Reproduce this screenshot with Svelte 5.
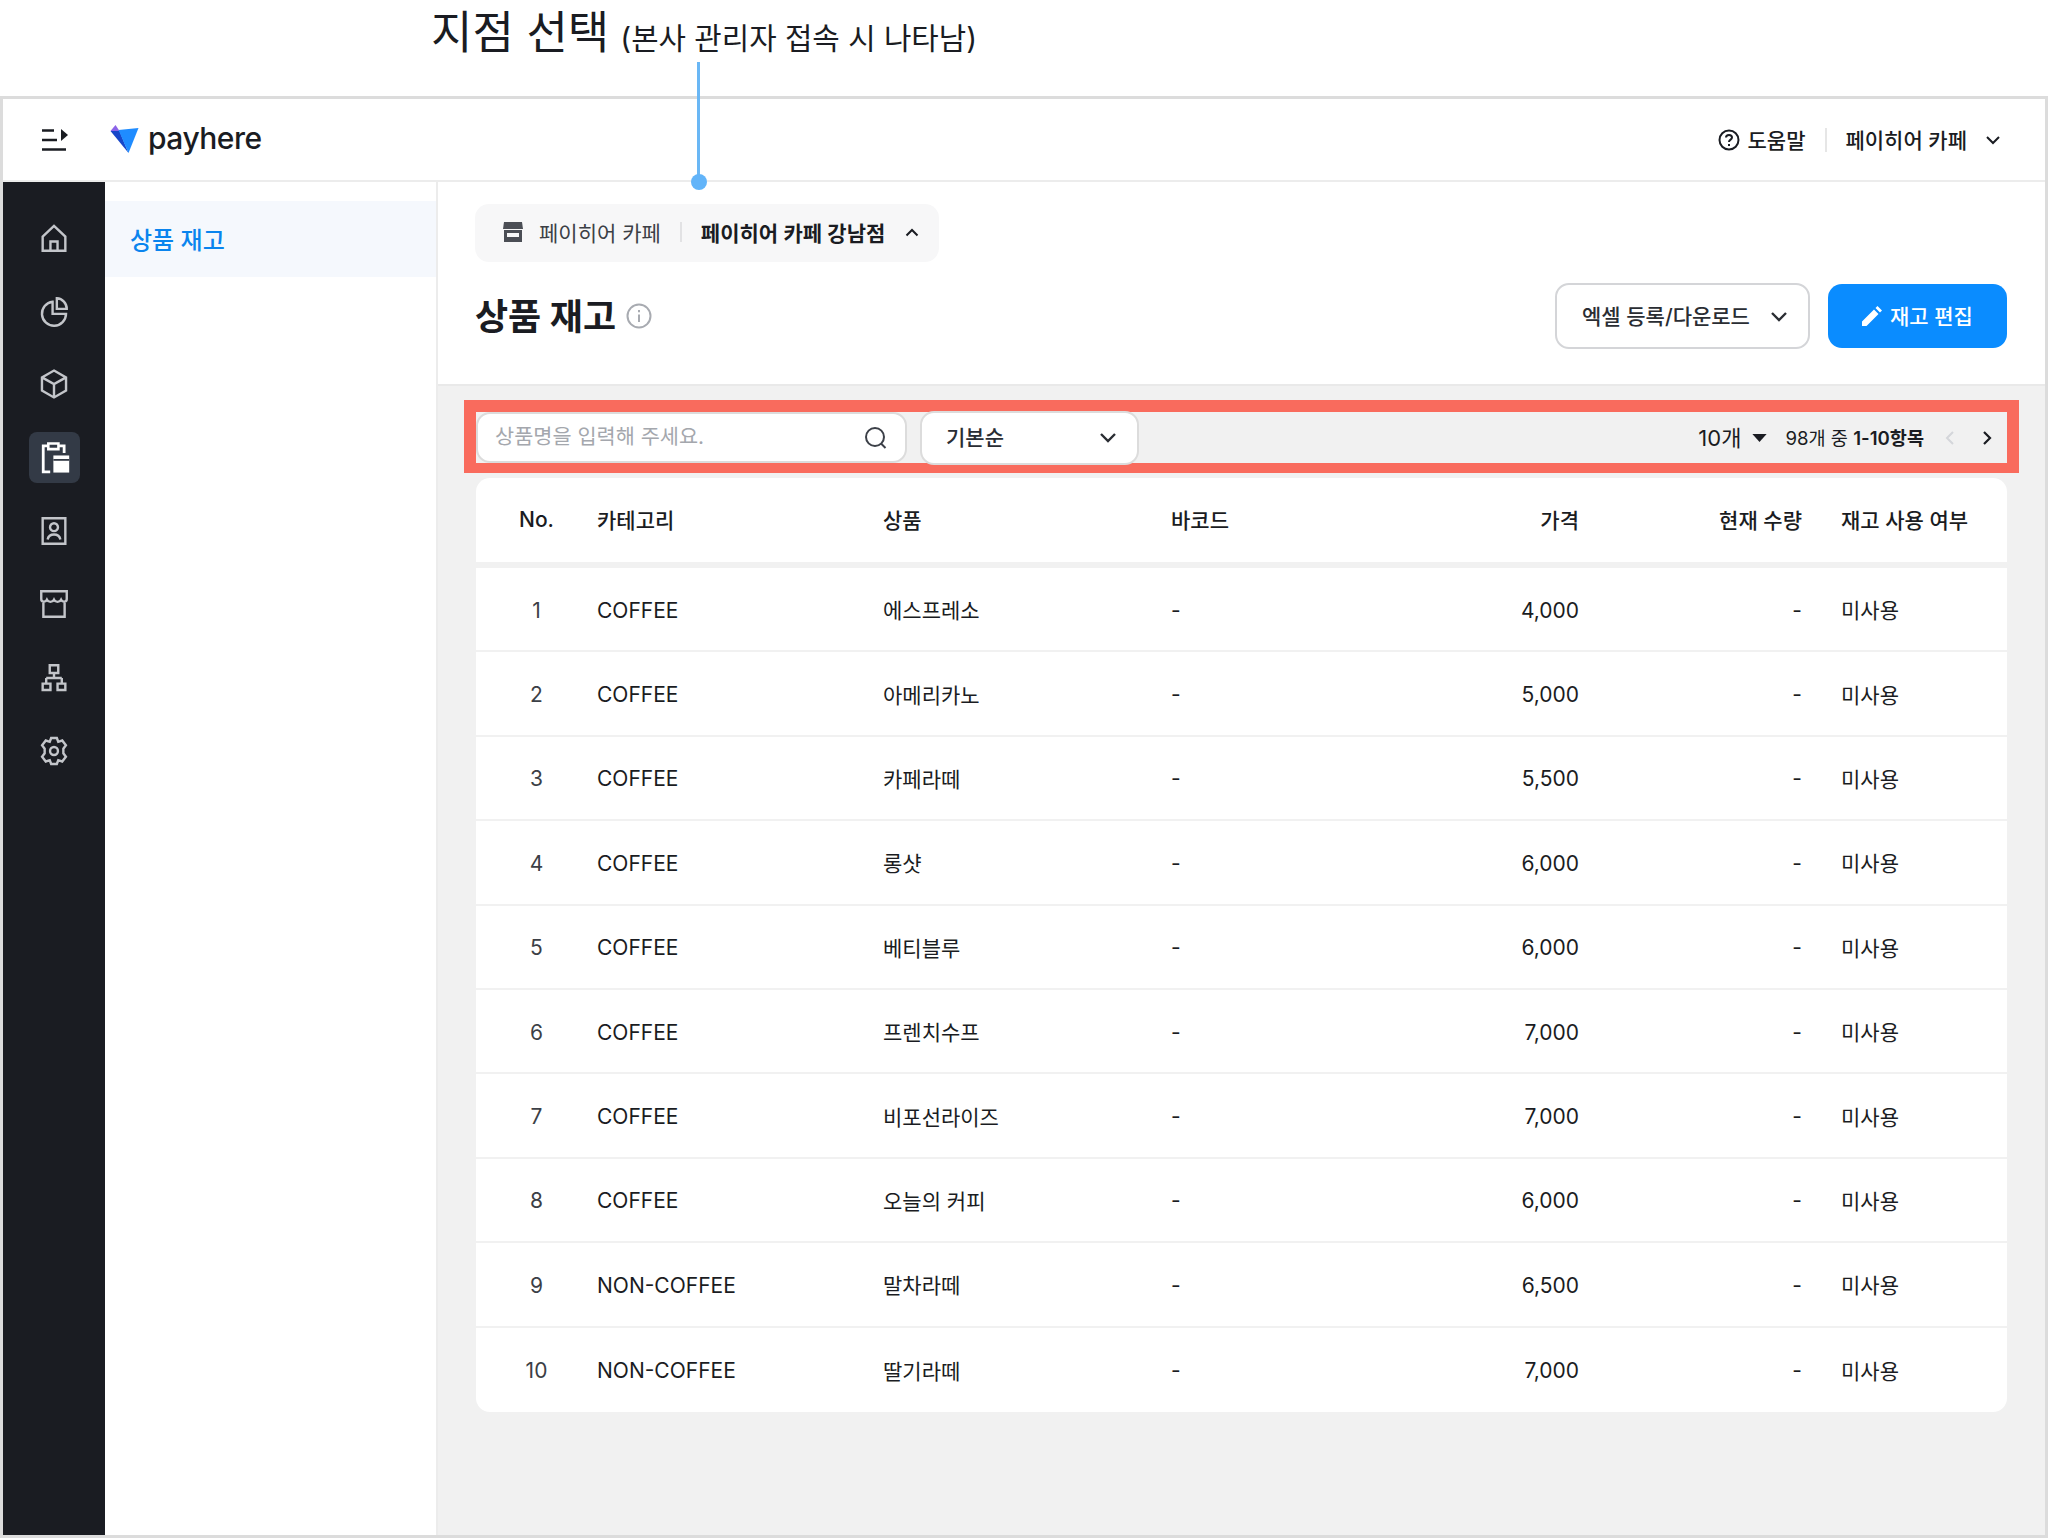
<script lang="ts">
    const rows = [
        { no: 1, category: 'COFFEE', name: '에스프레소', price: '4,000' },
        { no: 2, category: 'COFFEE', name: '아메리카노', price: '5,000' },
        { no: 3, category: 'COFFEE', name: '카페라떼', price: '5,500' },
        { no: 4, category: 'COFFEE', name: '롱샷', price: '6,000' },
        { no: 5, category: 'COFFEE', name: '베티블루', price: '6,000' },
        { no: 6, category: 'COFFEE', name: '프렌치수프', price: '7,000' },
        { no: 7, category: 'COFFEE', name: '비포선라이즈', price: '7,000' },
        { no: 8, category: 'COFFEE', name: '오늘의 커피', price: '6,000' },
        { no: 9, category: 'NON-COFFEE', name: '말차라떼', price: '6,500' },
        { no: 10, category: 'NON-COFFEE', name: '딸기라떼', price: '7,000' }
    ];

    const navIcons = [
        'M4 11 12 3.5 20 11V21H4ZM9.5 21V14.5H14.5V21',
        'M11 5.5A8.5 8.5 0 1 0 20.5 14H11ZM14 3A7.5 7.5 0 0 1 21 10.5H14Z',
        'M12 2.5 20.5 7.3V16.7L12 21.5 3.5 16.7V7.3ZM3.5 7.3 12 12 20.5 7.3M12 12V21.5',
        '',
        'M4 3H20V21H4ZM7.5 18C8 15.5 10 14.5 12 14.5S16 15.5 16.5 18M12 6.5A2.8 2.8 0 1 0 12 12.1 2.8 2.8 0 1 0 12 6.5Z',
        'M3 3H21V8.5C21 11 18 11 17 9 16 11 13 11 12 9 11 11 8 11 7 9 6 11 3 11 3 8.5ZM4.5 10.5V21H19.5V10.5',
        'M9 3H15V8.5H9ZM12 8.5V12M6.5 12H17.5M4 16H9.5V20.5H4ZM14.5 16H20V20.5H14.5ZM6.5 12V16M17.5 12V16',
        'M10 2.8H14L15 5.5 17.8 4.6 20.4 8 18.6 10.4V13.6L20.4 16 17.8 19.4 15 18.5 14 21.2H10L9 18.5 6.2 19.4 3.6 16 5.4 13.6V10.4L3.6 8 6.2 4.6 9 5.5ZM12 9.2A2.8 2.8 0 1 0 12 14.8 2.8 2.8 0 1 0 12 9.2Z'
    ];
</script>

<div class="page">
    <div class="annotation">
        <span class="anno-title">지점 선택</span>
        <span class="anno-sub">(본사 관리자 접속 시 나타남)</span>
    </div>
    <div class="pointer"></div>

    <div class="frame">
        <header class="topbar">
            <svg class="menu-icon" width="26" height="22" viewBox="0 0 26 22">
                <path d="M0 1.5H12M0 11H15M0 20.5H24" stroke="#1a1c22" stroke-width="2.4" fill="none" />
                <path d="M19 0 26 6 19 12Z" fill="#1a1c22" />
            </svg>
            <svg class="logo-mark" width="31" height="30" viewBox="0 0 30 30">
                <path d="M1 6 6 0 10 6Z" fill="#8c63e8" />
                <path d="M1 6 19 28 10 6Z" fill="#1746c9" />
                <path d="M9 5 29 3 19 28Z" fill="#1f8cff" />
            </svg>
            <span class="logo-text">payhere</span>
            <div class="topbar-right">
                <svg width="22" height="22" viewBox="0 0 22 22" fill="none" stroke="#1a1c22" stroke-width="2">
                    <circle cx="11" cy="11" r="9.5" />
                    <path d="M8 8.6C8 6.8 9.4 6 11 6S14 7 14 8.6C14 10.6 11 10.6 11 13" />
                    <path d="M11 15V17" />
                </svg>
                <span class="help">도움말</span>
                <span class="top-divider"></span>
                <span class="account">페이히어 카페</span>
                <svg width="16" height="10" viewBox="0 0 16 10" fill="none" stroke="#1a1c22" stroke-width="2">
                    <path d="M2 2 8 8 14 2" />
                </svg>
            </div>
        </header>

        <div class="body">
            <nav class="rail">
                {#each navIcons as d, i}
                    <div class="rail-item" class:active={i === 3}>
                        {#if i === 3}
                            <svg width="38" height="38" viewBox="0 0 30 30">
                                <path d="M11 5.5H6.5V26H12M19 5.5H23V11" fill="none" stroke="#fff" stroke-width="2.2" />
                                <path d="M10.5 3.5H18.5V8H10.5Z" fill="none" stroke="#fff" stroke-width="2" />
                                <path d="M14.5 13H27V26.5H14.5Z" fill="#fff" />
                                <path d="M14.5 16.5H27" stroke="#333a46" stroke-width="1.4" />
                            </svg>
                        {:else}
                            <svg width="34" height="34" viewBox="0 0 24 24" fill="none" stroke="#c3c5ca" stroke-width="1.7">
                                <path {d} />
                            </svg>
                        {/if}
                    </div>
                {/each}
            </nav>

            <aside class="subnav">
                <div class="subnav-item">상품 재고</div>
            </aside>

            <main class="content">
                <section class="head">
                    <div class="branch">
                        <svg width="22" height="20" viewBox="0 0 22 20">
                            <path d="M2 0H20L21 7H1Z" fill="#4b4e55" />
                            <path d="M2 8H20V20H2Z" fill="#4b4e55" />
                            <path d="M5 11H17V15H5Z" fill="#f7f7f8" />
                        </svg>
                        <span class="branch-hq">페이히어 카페</span>
                        <span class="branch-divider"></span>
                        <span class="branch-store">페이히어 카페 강남점</span>
                        <svg width="14" height="9" viewBox="0 0 14 9" fill="none" stroke="#1a1c22" stroke-width="2">
                            <path d="M1.5 7.5 7 2 12.5 7.5" />
                        </svg>
                    </div>
                    <div class="title-row">
                        <h1>상품 재고</h1>
                        <svg class="info" width="26" height="26" viewBox="0 0 26 26" fill="none" stroke="#a8abb1" stroke-width="2">
                            <circle cx="13" cy="13" r="11.5" />
                            <path d="M13 11.5V19M13 7V9.2" />
                        </svg>
                        <div class="actions">
                            <button class="btn-outline">
                                <span>엑셀 등록/다운로드</span>
                                <svg width="18" height="11" viewBox="0 0 18 11" fill="none" stroke="#2a2d33" stroke-width="2.4">
                                    <path d="M2 2 9 9 16 2" />
                                </svg>
                            </button>
                            <button class="btn-primary">
                                <svg width="20" height="20" viewBox="0 0 20 20" fill="#fff">
                                    <path d="M0 20V15.5L12 3.5 16.5 8 4.5 20ZM13.5 2 15.5 0 20 4.5 18 6.5Z" />
                                </svg>
                                <span>재고 편집</span>
                            </button>
                        </div>
                    </div>
                </section>

                <section class="list">
                    <div class="filter">
                        <div class="search">
                            <span>상품명을 입력해 주세요.</span>
                            <svg width="24" height="24" viewBox="0 0 24 24" fill="none" stroke="#3c4048" stroke-width="2">
                                <circle cx="11" cy="11" r="9" />
                                <path d="M17 17.5 21.5 22" />
                            </svg>
                        </div>
                        <div class="select">
                            <span>기본순</span>
                            <svg width="18" height="11" viewBox="0 0 18 11" fill="none" stroke="#2a2d33" stroke-width="2.4">
                                <path d="M2 2 9 9 16 2" />
                            </svg>
                        </div>
                        <div class="pager">
                            <span class="per-page">10개</span>
                            <svg class="caret" width="15" height="8" viewBox="0 0 16 9"><path d="M0 0H16L8 9Z" fill="#1a1c22" /></svg>
                            <span class="range">98개 중 <b>1-10항목</b></span>
                            <svg class="prev" width="10" height="16" viewBox="0 0 10 16" fill="none" stroke="#d4d6da" stroke-width="2">
                                <path d="M8 2 2 8 8 14" />
                            </svg>
                            <svg class="next" width="10" height="16" viewBox="0 0 10 16" fill="none" stroke="#1a1c22" stroke-width="2.2">
                                <path d="M2 2 8 8 2 14" />
                            </svg>
                        </div>
                    </div>

                    <div class="table">
                        <div class="row head-row">
                            <div class="center">No.</div>
                            <div>카테고리</div>
                            <div>상품</div>
                            <div>바코드</div>
                            <div class="right">가격</div>
                            <div class="right">현재 수량</div>
                            <div class="usage">재고 사용 여부</div>
                        </div>
                        {#each rows as r}
                            <div class="row">
                                <div class="center no latin">{r.no}</div>
                                <div class="latin">{r.category}</div>
                                <div>{r.name}</div>
                                <div class="latin">-</div>
                                <div class="right latin">{r.price}</div>
                                <div class="right latin">-</div>
                                <div class="usage">미사용</div>
                            </div>
                        {/each}
                    </div>
                </section>
            </main>
        </div>
    </div>
</div>

<style>
:global(body) {
    margin: 0;
}

.page {
    position: relative;
    width: 2048px;
    height: 1538px;
    background: #fff;
    color: #1a1c22;
    font-family: Inter, "Noto Sans CJK KR", sans-serif;
    overflow: hidden;
}

/* ANNOTATION */
.annotation {
    height: 96px;
    box-sizing: border-box;
    padding: 3px 0 0 431px;
    display: flex;
    align-items: baseline;
    gap: 11px;
    line-height: 60px;
}

.anno-title {
    font-size: 45px;
}

.anno-sub {
    font-size: 29.8px;
}

.pointer {
    position: absolute;
    left: 697px;
    top: 62px;
    width: 3px;
    height: 120px;
    background: #6ab7f5;
}

.pointer::after {
    content: '';
    position: absolute;
    left: -6.5px;
    bottom: -8px;
    width: 16px;
    height: 16px;
    border-radius: 50%;
    background: #62b4f9;
}

/* FRAME */
.frame {
    height: 1442px;
    box-sizing: border-box;
    border: 3px solid #dcdcdc;
    display: flex;
    flex-direction: column;
}

.topbar {
    height: 83px;
    flex: none;
    box-sizing: border-box;
    border-bottom: 2px solid #ececec;
    display: flex;
    align-items: center;
    padding: 0 44px 0 39px;
}

.logo-mark {
    margin-left: 41px;
}

.logo-text {
    margin-left: 8px;
    font-size: 30px;
    font-weight: 500;
    letter-spacing: -0.5px;
    line-height: 1;
    margin-top: -3px;
}

.topbar-right {
    margin-left: auto;
    display: flex;
    align-items: center;
    font-size: 21px;
    font-weight: 500;
}

.help {
    margin-left: 8px;
    padding-bottom: 2px;
}

.top-divider {
    width: 2px;
    height: 24px;
    background: #e6e6e6;
    margin: 0 18px 0 20px;
}

.account {
    margin-right: 18px;
    padding-bottom: 2px;
}

.body {
    flex: 1;
    display: flex;
    min-height: 0;
}

/* RAIL */
.rail {
    width: 102px;
    flex: none;
    background: #1a1c22;
    box-sizing: border-box;
    padding-top: 30px;
    display: flex;
    flex-direction: column;
    align-items: center;
    gap: 22.4px;
}

.rail-item {
    width: 51px;
    height: 51px;
    border-radius: 8px;
    display: flex;
    align-items: center;
    justify-content: center;
}

.rail-item.active {
    background: #333a46;
}

/* SUBNAV */
.subnav {
    width: 333px;
    flex: none;
    box-sizing: border-box;
    padding-top: 19px;
    border-right: 2px solid #ececec;
}

.subnav-item {
    height: 76px;
    box-sizing: border-box;
    display: flex;
    align-items: center;
    padding: 0 0 2px 25px;
    background: #f5f8fd;
    color: #0a84ee;
    font-size: 24px;
    font-weight: 500;
}

/* CONTENT */
.content {
    flex: 1;
    display: flex;
    flex-direction: column;
    min-width: 0;
    background: #f1f1f1;
}

.head {
    height: 204px;
    flex: none;
    box-sizing: border-box;
    background: #fff;
    border-bottom: 2px solid #e9e9e9;
    padding: 22px 38px 0 37px;
}

.branch {
    display: inline-flex;
    align-items: center;
    height: 58px;
    box-sizing: border-box;
    padding: 0 20px 2px 27px;
    background: #f7f7f8;
    border-radius: 14px;
    font-size: 21px;
}

.branch-hq {
    margin-left: 15px;
    color: #3c3f46;
}

.branch-divider {
    width: 2px;
    height: 20px;
    background: #e2e2e4;
    margin: 0 19px;
}

.branch-store {
    font-weight: 600;
    margin-right: 20px;
}

.title-row {
    display: flex;
    align-items: center;
    margin-top: 21px;
}

h1 {
    margin: 0;
    font-size: 36px;
    font-weight: 700;
    line-height: 64px;
    padding-top: 2px;
}

.info {
    margin-left: 10px;
}

.actions {
    margin-left: auto;
    display: flex;
    align-items: center;
    gap: 18px;
}

button {
    font: inherit;
    font-size: 21px;
    display: flex;
    align-items: center;
    cursor: pointer;
}

button span {
    padding-bottom: 2px;
}

.btn-outline {
    width: 255px;
    height: 66px;
    justify-content: space-between;
    padding: 0 20px 0 25px;
    background: #fff;
    border: 2px solid #d4d5d8;
    border-radius: 14px;
    color: #2a2d33;
    font-weight: 500;
}

.btn-primary {
    width: 179px;
    height: 64px;
    justify-content: center;
    gap: 8px;
    background: #0a8cff;
    border: none;
    border-radius: 14px;
    color: #fff;
    font-weight: 500;
}

.list {
    padding: 14px 26px 0 26px;
}

/* FILTER */
.filter {
    height: 73px;
    box-sizing: border-box;
    border: solid #f96b5d;
    border-width: 12px 12px 10px;
    display: flex;
    align-items: center;
}

.search {
    width: 431px;
    height: 51px;
    flex: none;
    box-sizing: border-box;
    background: #fff;
    border: 2px solid #dcdcdc;
    border-radius: 14px;
    display: flex;
    align-items: center;
    justify-content: space-between;
    padding: 0 17px 0 17px;
    color: #a4a7ad;
    font-size: 20.8px;
}

.search span {
    padding-bottom: 5px;
}

.select {
    width: 219px;
    height: 54px;
    flex: none;
    margin-left: 13px;
    box-sizing: border-box;
    background: #fff;
    border: 2px solid #dcdcdc;
    border-radius: 14px;
    display: flex;
    align-items: center;
    justify-content: space-between;
    padding: 0 20px 0 24px;
    font-size: 21px;
    font-weight: 500;
    color: #2a2d33;
}

.select span {
    padding-bottom: 3px;
}

.pager {
    margin-left: auto;
    padding-right: 15px;
    display: flex;
    align-items: center;
}

.per-page {
    font-size: 22px;
    padding-bottom: 3px;
}

.caret {
    margin-left: 11px;
}

.range {
    margin-left: 18px;
    font-size: 18.6px;
    padding-bottom: 2px;
}

.range b {
    font-weight: 600;
}

.prev {
    margin-left: 21px;
}

.next {
    margin-left: 27px;
}

/* TABLE */
.table {
    margin: 5px 12px 0;
    background: #fff;
    border-radius: 14px;
    overflow: hidden;
}

.row {
    height: 84.4px;
    box-sizing: border-box;
    display: grid;
    grid-template-columns: 121px 286px 288px 200px 208px 223px 1fr;
    align-items: center;
    border-bottom: 2px solid #f1f1f1;
    font-size: 21px;
}

.row:last-child {
    border-bottom: none;
}

.head-row {
    height: 90px;
    padding-bottom: 2px;
    border-bottom: 6px solid #f1f1f1;
    font-weight: 500;
}

.center {
    text-align: center;
}

.no {
    color: #3c3f46;
}

.right {
    text-align: right;
}

.latin {
    padding-top: 2px;
}

.usage {
    padding-left: 39px;
}
</style>
